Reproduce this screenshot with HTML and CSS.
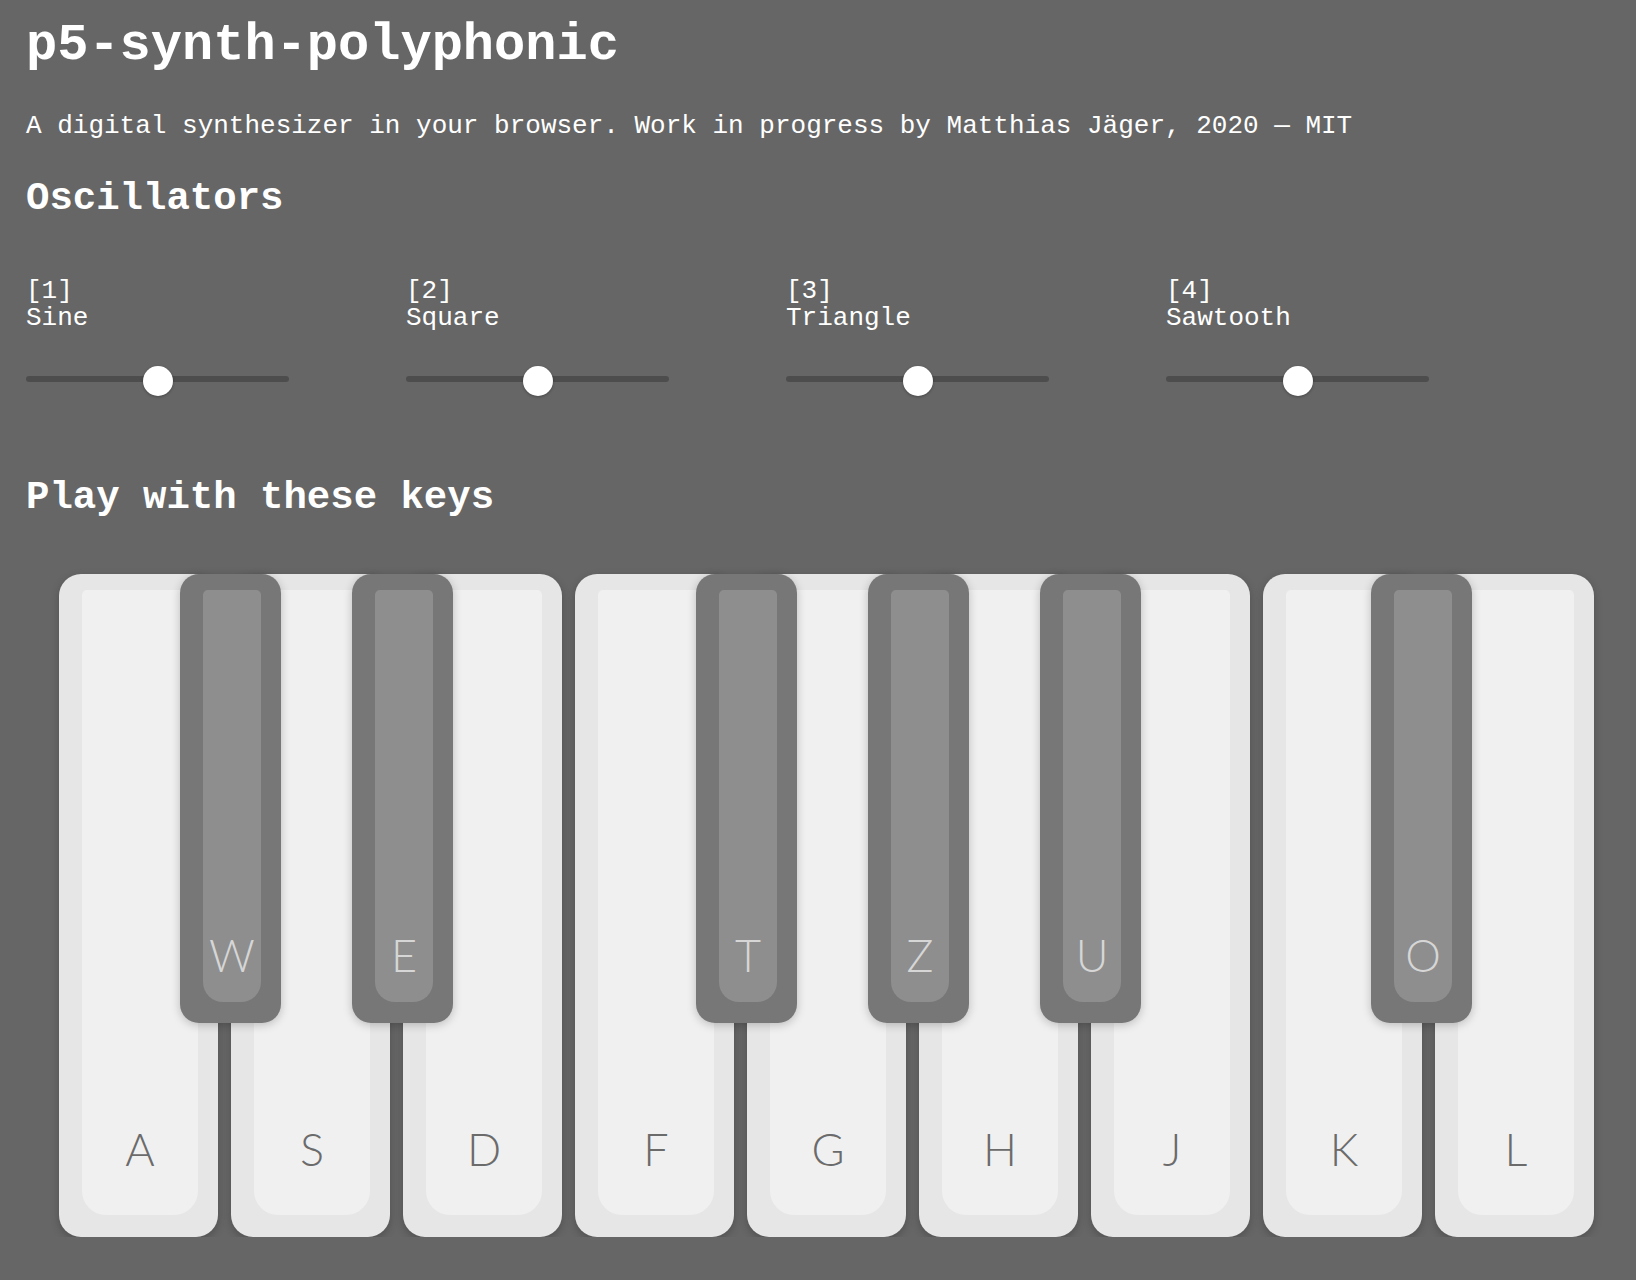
FILE: index.html
```html
<!DOCTYPE html>
<html lang="en">
<head>
<meta charset="utf-8">
<title>p5-synth-polyphonic</title>
<link rel="stylesheet" href="styles.css">
</head>
<body>
  <h1 class="title">p5-synth-polyphonic</h1>
  <p class="subtitle">A digital synthesizer in your browser. Work in progress by Matthias Jäger, 2020 — MIT</p>

  <h2 class="section-title osc-title">Oscillators</h2>
  <div class="osc-grid">
    <div class="osc">
      <label class="osc-label"><span class="osc-num">[1]</span><span class="osc-name">Sine</span></label>
      <input class="osc-range" type="range" min="0" max="100" value="50">
    </div>
    <div class="osc">
      <label class="osc-label"><span class="osc-num">[2]</span><span class="osc-name">Square</span></label>
      <input class="osc-range" type="range" min="0" max="100" value="50">
    </div>
    <div class="osc">
      <label class="osc-label"><span class="osc-num">[3]</span><span class="osc-name">Triangle</span></label>
      <input class="osc-range" type="range" min="0" max="100" value="50">
    </div>
    <div class="osc">
      <label class="osc-label"><span class="osc-num">[4]</span><span class="osc-name">Sawtooth</span></label>
      <input class="osc-range" type="range" min="0" max="100" value="50">
    </div>
  </div>

  <h2 class="section-title keys-title">Play with these keys</h2>
  <div class="keyboard">
    <div class="white-row">
      <div class="wkey"><div class="wkey-face"><span class="wkey-label">A</span></div></div>
      <div class="wkey"><div class="wkey-face"><span class="wkey-label">S</span></div></div>
      <div class="wkey"><div class="wkey-face"><span class="wkey-label">D</span></div></div>
      <div class="wkey"><div class="wkey-face"><span class="wkey-label">F</span></div></div>
      <div class="wkey"><div class="wkey-face"><span class="wkey-label">G</span></div></div>
      <div class="wkey"><div class="wkey-face"><span class="wkey-label">H</span></div></div>
      <div class="wkey"><div class="wkey-face"><span class="wkey-label">J</span></div></div>
      <div class="wkey"><div class="wkey-face"><span class="wkey-label">K</span></div></div>
      <div class="wkey"><div class="wkey-face"><span class="wkey-label">L</span></div></div>
    </div>
    <div class="bkey bkey-w"><div class="bkey-face"><span class="bkey-label">W</span></div></div>
    <div class="bkey bkey-e"><div class="bkey-face"><span class="bkey-label">E</span></div></div>
    <div class="bkey bkey-t"><div class="bkey-face"><span class="bkey-label">T</span></div></div>
    <div class="bkey bkey-z"><div class="bkey-face"><span class="bkey-label">Z</span></div></div>
    <div class="bkey bkey-u"><div class="bkey-face"><span class="bkey-label">U</span></div></div>
    <div class="bkey bkey-o"><div class="bkey-face"><span class="bkey-label">O</span></div></div>
  </div>
</body>
</html>
```

FILE: styles.css
```css
html, body {
  margin: 0;
  background: #666666;
}

body {
  padding: 16px 26px 0 26px;
  color: #ffffff;
  font-family: "Liberation Mono", "Courier New", monospace;
  font-size: 26px;
  line-height: 30px;
}

.title {
  margin: 0;
  font-size: 52px;
  line-height: 60px;
  font-weight: bold;
}

.subtitle {
  margin: 35px 0 0 0;
  font-size: 26px;
  line-height: 30px;
  font-weight: normal;
}

.section-title {
  margin: 0;
  font-size: 39px;
  line-height: 44px;
  font-weight: bold;
}

.osc-title {
  margin-top: 36px;
}

.osc-grid {
  margin-top: 57px;
  display: grid;
  grid-template-columns: repeat(4, 263px);
  column-gap: 117px;
}

.osc {
  display: flex;
  flex-direction: column;
}

.osc-label {
  display: flex;
  flex-direction: column;
  line-height: 27px;
}

.osc-range {
  -webkit-appearance: none;
  appearance: none;
  margin: 32px 0 0 0;
  width: 263px;
  height: 30px;
  padding: 0;
  background: transparent;
}

.osc-range::-webkit-slider-runnable-track {
  height: 6px;
  border-radius: 3px;
  background: #4d4d4d;
}

.osc-range::-webkit-slider-thumb {
  -webkit-appearance: none;
  appearance: none;
  width: 30px;
  height: 30px;
  margin-top: -10px;
  border-radius: 50%;
  background: #ffffff;
  box-shadow: 0 1px 3px rgba(0, 0, 0, 0.3);
}

.keys-title {
  margin-top: 82px;
}

.keyboard {
  position: relative;
  margin: 54px 0 0 33px;
  width: 1535px;
  height: 663px;
}

.white-row {
  display: flex;
  gap: 13px;
  height: 100%;
}

.wkey {
  box-sizing: border-box;
  width: 159px;
  height: 100%;
  padding: 16px 20px 22px 23px;
  background: #e6e6e6;
  border-radius: 22px;
  box-shadow: 0 3px 8px rgba(0, 0, 0, 0.22);
  display: flex;
}

.wkey-face {
  flex: 1;
  background: #f0f0f0;
  border-radius: 5px 5px 24px 24px;
  display: flex;
  align-items: flex-end;
  justify-content: center;
  padding-bottom: 43px;
}

.wkey-label,
.bkey-label {
  font-family: Lato, "Open Sans", sans-serif;
  font-size: 45px;
  line-height: 46px;
  font-weight: 300;
}

.wkey-label {
  color: #6b6b6b;
}

.bkey {
  position: absolute;
  top: 0;
  box-sizing: border-box;
  width: 101px;
  height: 449px;
  padding: 16px 20px 21px 23px;
  background: #777777;
  border-radius: 19px;
  box-shadow: 0 2px 10px rgba(0, 0, 0, 0.22);
  display: flex;
}

.bkey-face {
  flex: 1;
  background: #8e8e8e;
  border-radius: 5px 5px 20px 20px;
  display: flex;
  align-items: flex-end;
  justify-content: center;
  padding-bottom: 24px;
}

.bkey-label {
  color: #d6d6d6;
}

.bkey-w { left: 121px; }
.bkey-e { left: 293px; }
.bkey-t { left: 637px; }
.bkey-z { left: 809px; }
.bkey-u { left: 981px; }
.bkey-o { left: 1312px; }
```
